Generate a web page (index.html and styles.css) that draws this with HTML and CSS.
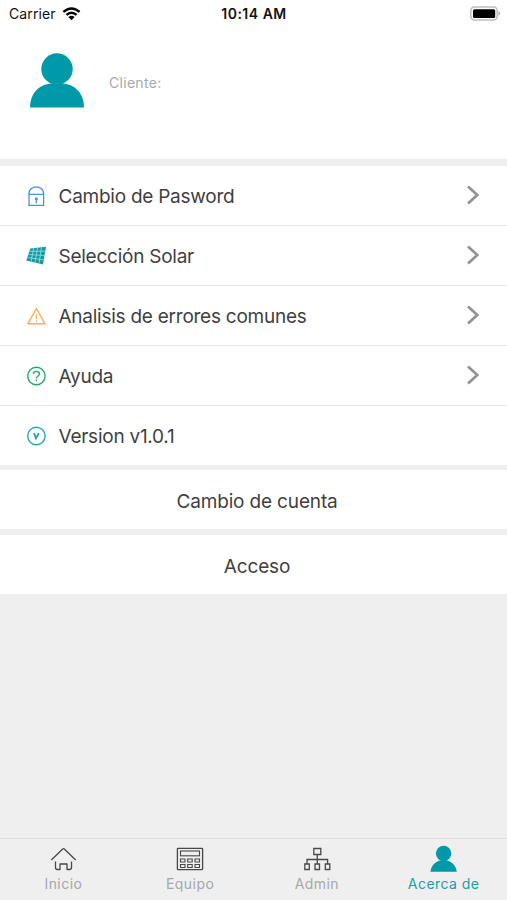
FILE: index.html
```html
<!DOCTYPE html>
<html lang="es">
<head>
<meta charset="utf-8">
<meta name="viewport" content="width=device-width, initial-scale=1">
<title>Acerca de</title>
<link rel="stylesheet" href="styles.css">
</head>
<body>
<div class="app">
  <header class="status">
    <div class="carrier"><span class="carrier-name">Carrier</span>
      <svg width="19" height="14" viewBox="0 0 18 14" fill="none" stroke="#000" stroke-width="2.5"><path d="M.9 4.900Q9-2 17.100 4.900M3.900 7.900Q9 3.500 14.100 7.900"/><path d="M5.900 10Q9 7.700 12.100 10L9 13.200Z" fill="#000" stroke="none"/></svg>
    </div>
    <div class="time">10:14 AM</div>
    <svg class="battery" width="31" height="16" viewBox="0 0 31 16"><rect x=".8" y="1" width="26.400" height="13" rx="3.800" fill="#fff" stroke="#bdbdbd" stroke-width="1.500"/><rect x="3" y="3.200" width="22.200" height="8.800" rx="1.500"/><path d="M28.500 5q3.400 2.400 0 5z" fill="#aaa"/></svg>
  </header>
  <section class="profile">
    <svg class="avatar" width="56" height="56" viewBox="0 0 56 56" fill="#0099aa"><circle cx="28" cy="16" r="15.700"/><path d="M1 54.500C1 39 12 30.500 23 30.500H33C44 30.500 55 39 55 54.500Z"/></svg>
    <span class="client">Cliente:</span>
  </section>
  <nav class="menu">
    <a class="row">
      <svg class="icon" viewBox="0 0 20 20" fill="none" stroke="#4a90d6" stroke-width="1.300"><path d="M3 19.300V7.500a7.300 6.700 0 0 1 14.600 0V19.300ZM3 8.400H17.600M10.300 12v5.200"/><circle cx="10.300" cy="12.800" r="1.500" fill="#4a90d6" stroke="none"/></svg>
      <span class="label">Cambio de Pasword</span>
      <svg class="chevron" viewBox="0 0 14 22"><path d="M2 2.500L11.300 11L2 19.500"/></svg>
    </a>
    <a class="row">
      <svg class="icon" viewBox="0 0 20 20"><path d="M4.300 2.500L20 .8L17 18.500L.3 14.500Z" fill="#159aa4"/><path d="M7.800 2.200L5 15.500M11.600 1.800L9 16.500M15.500 1.400L13 17.500M3.500 5.300L19.300 5.200M2.500 8.500L18.600 9.500M1.500 11.500L17.800 14" stroke="#a5e0df" stroke-width=".8"/></svg>
      <span class="label">Selección Solar</span>
      <svg class="chevron" viewBox="0 0 14 22"><path d="M2 2.500L11.300 11L2 19.500"/></svg>
    </a>
    <a class="row">
      <svg class="icon" viewBox="0 0 20 20" fill="none" stroke="#f3b25c" stroke-width="1.500" stroke-linejoin="round"><path d="M10.400 2.500L19 17.800H1.800Z"/><path d="M10.400 8.200v5M10.400 14.600v1.300" stroke-width="1.200"/></svg>
      <span class="label">Analisis de errores comunes</span>
      <svg class="chevron" viewBox="0 0 14 22"><path d="M2 2.500L11.300 11L2 19.500"/></svg>
    </a>
    <a class="row">
      <svg class="icon" viewBox="0 0 20 20" fill="none" stroke="#29a766" stroke-width="1.400"><circle cx="10.400" cy="10" r="8.700"/><path d="M7.400 8C7.400 4.500 13.400 4.500 13.400 8C13.400 10 10.400 10 10.400 12.400M10.400 13.500v1.500"/></svg>
      <span class="label">Ayuda</span>
      <svg class="chevron" viewBox="0 0 14 22"><path d="M2 2.500L11.300 11L2 19.500"/></svg>
    </a>
    <div class="row">
      <svg class="icon" viewBox="0 0 20 20" fill="none" stroke="#2aa8b2" stroke-width="1.400"><circle cx="10.400" cy="10" r="8.700"/><path d="M8 7.200L10 12.300L12.900 7.200" stroke-width="1.900"/></svg>
      <span class="label">Version v1.0.1</span>
    </div>
  </nav>
  <a class="action account"><span>Cambio de cuenta</span></a>
  <a class="action access"><span>Acceso</span></a>
  <footer class="tabs">
    <a class="tab">
      <svg width="28" height="28" viewBox="0 0 28 28" fill="none" stroke="#484848" stroke-width="1.300" stroke-linejoin="round"><path d="M2.300 15L13.700 4Q14.500 3.200 15.300 4L26.700 15M6.500 16.500V22.500Q6.500 24.500 8.500 24.500H11V19H18V24.500H20.500Q22.500 24.500 22.500 22.500V16.500"/></svg>
      <span>Inicio</span>
    </a>
    <a class="tab">
      <svg width="28" height="28" viewBox="0 0 28 28" fill="none" stroke="#484848" stroke-width="1.100"><rect x="1.400" y="3.400" width="25.200" height="21.200" rx=".7" stroke-width="1.300"/><rect x="4.500" y="6" width="19" height="4.800"/><path d="M4.500 14h4.500v3H4.500ZM11.700 14h4.500v3h-4.500ZM19 14h4.500v3H19ZM4.500 19.500h4.500v3H4.500ZM11.700 19.500h4.500v3h-4.500ZM19 19.500h4.500v3H19Z"/></svg>
      <span>Equipo</span>
    </a>
    <a class="tab">
      <svg width="28" height="28" viewBox="0 0 28 28" fill="none" stroke="#484848" stroke-width="1.300"><path d="M10.800 3.500h7v6h-7ZM14.300 9.500V19M4 19V14.500H24.600V19M1.800 19h4.500v5.500H1.800ZM12 19h4.500v5.500H12ZM22.300 19h4.500v5.500H22.300Z"/></svg>
      <span>Admin</span>
    </a>
    <a class="tab active">
      <svg width="28" height="28" viewBox="0 0 28 28" fill="#0099aa"><circle cx="13.600" cy="8.500" r="7.700"/><path d="M.4 26.700C1.100 20 6.600 15.800 10.600 15.500H16.600C20.600 15.800 26.100 20 26.800 26.700Z"/></svg>
      <span>Acerca de</span>
    </a>
  </footer>
</div>
</body>
</html>
```
FILE: styles.css
```css
* { box-sizing: border-box; }
body { margin: 0; font-family: Inter, "Liberation Sans", sans-serif; background: #efefef; color: #3f3f3f; }
svg { display: block; flex: none; }
.app { height: 900px; display: flex; flex-direction: column; }
.status { height: 28px; background: #fff; color: #111; display: grid; grid-template-columns: 1fr auto 1fr; align-items: center; padding: 0 6px 0 9px; }
.carrier { display: flex; align-items: center; gap: 6px; font-size: 14px; letter-spacing: .1px; padding-bottom: 1px; }
.time { font-size: 14px; font-weight: 600; line-height: 28px; letter-spacing: .5px; margin-left: -2px; }
.battery { justify-self: end; }
.profile { height: 131px; background: #fff; display: flex; padding: 25px 0 0 29px; }
.client { color: #a9a9a9; font-size: 14px; line-height: 20px; margin: 20px 0 0 24px; letter-spacing: .3px; }
.menu { margin-top: 7px; height: 299px; background: #fff; }
.row { height: 60px; display: flex; align-items: center; padding: 0 27px 0 26px; border-bottom: 1px solid #e5e5e5; }
.row:last-child { border-bottom: 0; height: 59px; }
.icon { width: 20px; height: 20px; }
.label { flex: 1; margin-left: 12.5px; padding-top: 3px; font-size: 19px; line-height: 28px; letter-spacing: -.25px; }
.chevron { width: 14px; height: 22px; margin-bottom: 2px; fill: none; stroke: #929292; stroke-width: 2.7; }
.action { height: 59px; display: flex; align-items: center; justify-content: center; background: #fff; font-size: 19px; letter-spacing: -.15px; padding: 3px 0 0 7px; }
.account { margin-top: 5px; }
.access { margin-top: 6px; }
.tabs { margin-top: auto; height: 62px; border-top: 1px solid #dedede; display: grid; grid-template-columns: repeat(4, 1fr); padding-top: 6px; }
.tab { display: flex; flex-direction: column; align-items: center; color: #a7a7a7; font-size: 14px; line-height: 20px; letter-spacing: .45px; }
.tab span { margin-top: 1px; }
.active { color: #169faf; }
```
